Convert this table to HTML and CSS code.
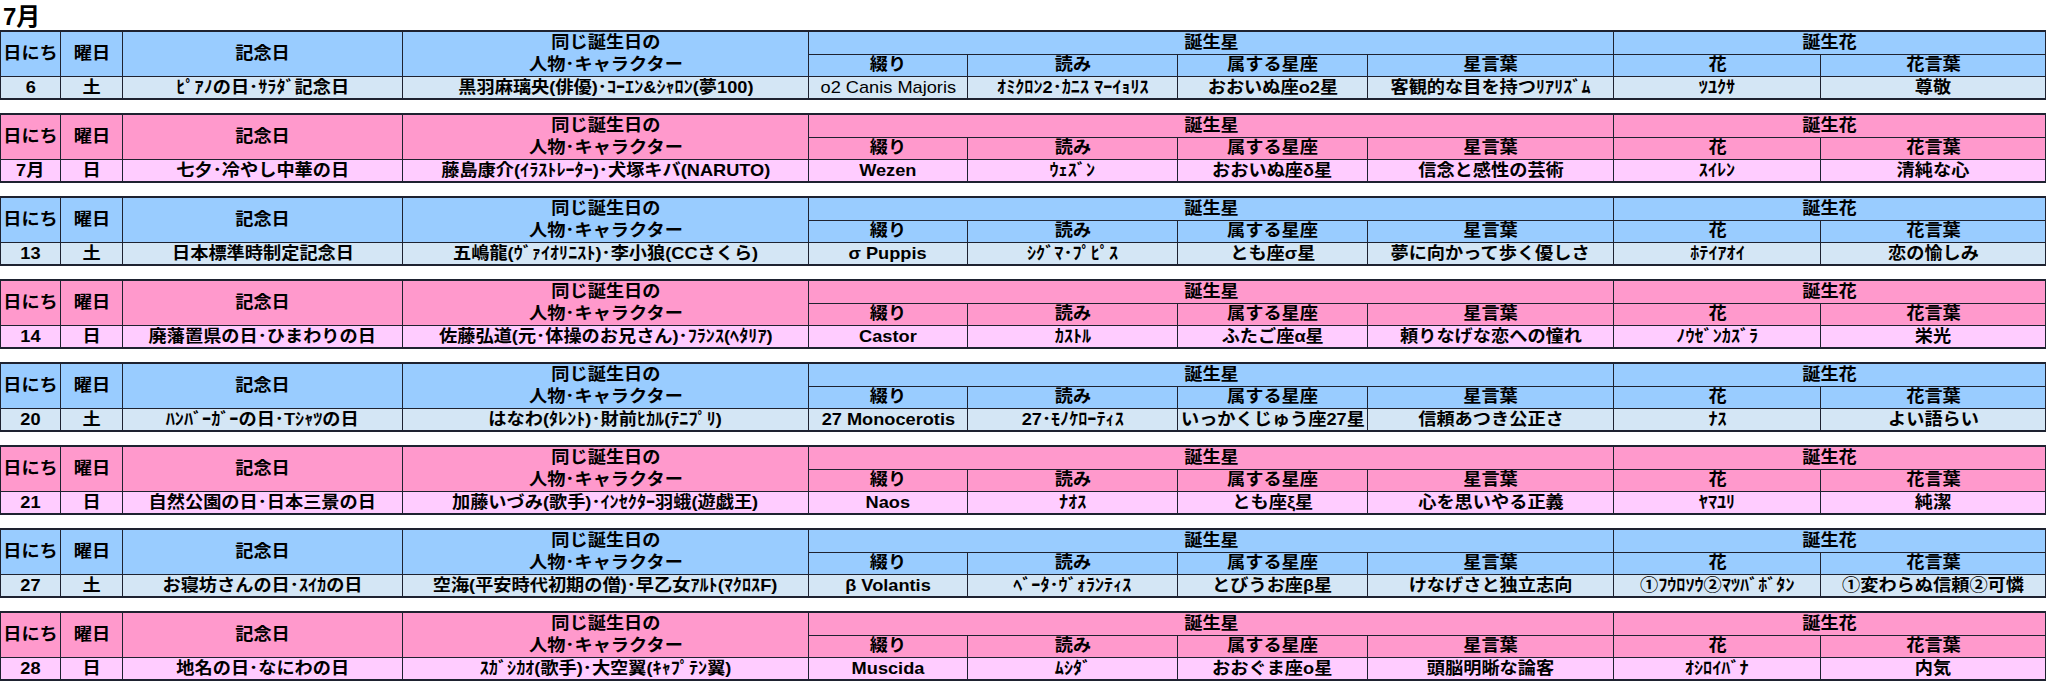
FILE: index.html
```html
<!DOCTYPE html>
<html lang="ja">
<head>
<meta charset="utf-8">
<title>7月</title>
<link rel="stylesheet" href="styles.css">
</head>
<body>
<div class="title">7月</div>

<table class="blk blue">
<colgroup><col class="c1"><col class="c2"><col class="c3"><col class="c4"><col class="c5"><col class="c6"><col class="c7"><col class="c8"><col class="c9"><col class="c10"></colgroup>
<tr class="h1"><td rowspan="2"><span class="s">日にち</span></td><td rowspan="2"><span class="s">曜日</span></td><td rowspan="2"><span class="s">記念日</span></td><td rowspan="2" class="two"><span class="s">同じ誕生日の<br>人物･キャラクター</span></td><td colspan="4"><span class="s">誕生星</span></td><td colspan="2"><span class="s">誕生花</span></td></tr>
<tr class="h2"><td><span class="s">綴り</span></td><td><span class="s">読み</span></td><td><span class="s">属する星座</span></td><td><span class="s">星言葉</span></td><td><span class="s">花</span></td><td><span class="s">花言葉</span></td></tr>
<tr class="d"><td><span class="s">6</span></td><td><span class="s">土</span></td><td><span class="s">ﾋﾟｱﾉの日･ｻﾗﾀﾞ記念日</span></td><td><span class="s">黒羽麻璃央(俳優)･ｺｰｴﾝ&amp;ｼｬﾛﾝ(夢100)</span></td><td><span class="s nb">o2 Canis Majoris</span></td><td><span class="s">ｵﾐｸﾛﾝ2･ｶﾆｽ ﾏｰｲｮﾘｽ</span></td><td><span class="s">おおいぬ座o2星</span></td><td><span class="s">客観的な目を持つﾘｱﾘｽﾞﾑ</span></td><td><span class="s">ﾂﾕｸｻ</span></td><td><span class="s">尊敬</span></td></tr>
</table>

<table class="blk pink">
<colgroup><col class="c1"><col class="c2"><col class="c3"><col class="c4"><col class="c5"><col class="c6"><col class="c7"><col class="c8"><col class="c9"><col class="c10"></colgroup>
<tr class="h1"><td rowspan="2"><span class="s">日にち</span></td><td rowspan="2"><span class="s">曜日</span></td><td rowspan="2"><span class="s">記念日</span></td><td rowspan="2" class="two"><span class="s">同じ誕生日の<br>人物･キャラクター</span></td><td colspan="4"><span class="s">誕生星</span></td><td colspan="2"><span class="s">誕生花</span></td></tr>
<tr class="h2"><td><span class="s">綴り</span></td><td><span class="s">読み</span></td><td><span class="s">属する星座</span></td><td><span class="s">星言葉</span></td><td><span class="s">花</span></td><td><span class="s">花言葉</span></td></tr>
<tr class="d"><td><span class="s">7月</span></td><td><span class="s">日</span></td><td><span class="s">七夕･冷やし中華の日</span></td><td><span class="s">藤島康介(ｲﾗｽﾄﾚｰﾀｰ)･犬塚キバ(NARUTO)</span></td><td><span class="s">Wezen</span></td><td><span class="s">ｳｪｽﾞﾝ</span></td><td><span class="s">おおいぬ座δ星</span></td><td><span class="s">信念と感性の芸術</span></td><td><span class="s">ｽｲﾚﾝ</span></td><td><span class="s">清純な心</span></td></tr>
</table>

<table class="blk blue">
<colgroup><col class="c1"><col class="c2"><col class="c3"><col class="c4"><col class="c5"><col class="c6"><col class="c7"><col class="c8"><col class="c9"><col class="c10"></colgroup>
<tr class="h1"><td rowspan="2"><span class="s">日にち</span></td><td rowspan="2"><span class="s">曜日</span></td><td rowspan="2"><span class="s">記念日</span></td><td rowspan="2" class="two"><span class="s">同じ誕生日の<br>人物･キャラクター</span></td><td colspan="4"><span class="s">誕生星</span></td><td colspan="2"><span class="s">誕生花</span></td></tr>
<tr class="h2"><td><span class="s">綴り</span></td><td><span class="s">読み</span></td><td><span class="s">属する星座</span></td><td><span class="s">星言葉</span></td><td><span class="s">花</span></td><td><span class="s">花言葉</span></td></tr>
<tr class="d"><td><span class="s">13</span></td><td><span class="s">土</span></td><td><span class="s">日本標準時制定記念日</span></td><td><span class="s">五嶋龍(ｳﾞｧｲｵﾘﾆｽﾄ)･李小狼(CCさくら)</span></td><td><span class="s">σ Puppis</span></td><td><span class="s">ｼｸﾞﾏ･ﾌﾟﾋﾟｽ</span></td><td><span class="s">とも座σ星</span></td><td><span class="s">夢に向かって歩く優しさ</span></td><td><span class="s">ﾎﾃｲｱｵｲ</span></td><td><span class="s">恋の愉しみ</span></td></tr>
</table>

<table class="blk pink">
<colgroup><col class="c1"><col class="c2"><col class="c3"><col class="c4"><col class="c5"><col class="c6"><col class="c7"><col class="c8"><col class="c9"><col class="c10"></colgroup>
<tr class="h1"><td rowspan="2"><span class="s">日にち</span></td><td rowspan="2"><span class="s">曜日</span></td><td rowspan="2"><span class="s">記念日</span></td><td rowspan="2" class="two"><span class="s">同じ誕生日の<br>人物･キャラクター</span></td><td colspan="4"><span class="s">誕生星</span></td><td colspan="2"><span class="s">誕生花</span></td></tr>
<tr class="h2"><td><span class="s">綴り</span></td><td><span class="s">読み</span></td><td><span class="s">属する星座</span></td><td><span class="s">星言葉</span></td><td><span class="s">花</span></td><td><span class="s">花言葉</span></td></tr>
<tr class="d"><td><span class="s">14</span></td><td><span class="s">日</span></td><td><span class="s">廃藩置県の日･ひまわりの日</span></td><td><span class="s">佐藤弘道(元･体操のお兄さん)･ﾌﾗﾝｽ(ﾍﾀﾘｱ)</span></td><td><span class="s">Castor</span></td><td><span class="s">ｶｽﾄﾙ</span></td><td><span class="s">ふたご座α星</span></td><td><span class="s">頼りなげな恋への憧れ</span></td><td><span class="s">ﾉｳｾﾞﾝｶｽﾞﾗ</span></td><td><span class="s">栄光</span></td></tr>
</table>

<table class="blk blue">
<colgroup><col class="c1"><col class="c2"><col class="c3"><col class="c4"><col class="c5"><col class="c6"><col class="c7"><col class="c8"><col class="c9"><col class="c10"></colgroup>
<tr class="h1"><td rowspan="2"><span class="s">日にち</span></td><td rowspan="2"><span class="s">曜日</span></td><td rowspan="2"><span class="s">記念日</span></td><td rowspan="2" class="two"><span class="s">同じ誕生日の<br>人物･キャラクター</span></td><td colspan="4"><span class="s">誕生星</span></td><td colspan="2"><span class="s">誕生花</span></td></tr>
<tr class="h2"><td><span class="s">綴り</span></td><td><span class="s">読み</span></td><td><span class="s">属する星座</span></td><td><span class="s">星言葉</span></td><td><span class="s">花</span></td><td><span class="s">花言葉</span></td></tr>
<tr class="d"><td><span class="s">20</span></td><td><span class="s">土</span></td><td><span class="s">ﾊﾝﾊﾞｰｶﾞｰの日･Tｼｬﾂの日</span></td><td><span class="s">はなわ(ﾀﾚﾝﾄ)･財前ﾋｶﾙ(ﾃﾆﾌﾟﾘ)</span></td><td><span class="s">27 Monocerotis</span></td><td><span class="s">27･ﾓﾉｹﾛｰﾃｨｽ</span></td><td><span class="s">いっかくじゅう座27星</span></td><td><span class="s">信頼あつき公正さ</span></td><td><span class="s">ﾅｽ</span></td><td><span class="s">よい語らい</span></td></tr>
</table>

<table class="blk pink">
<colgroup><col class="c1"><col class="c2"><col class="c3"><col class="c4"><col class="c5"><col class="c6"><col class="c7"><col class="c8"><col class="c9"><col class="c10"></colgroup>
<tr class="h1"><td rowspan="2"><span class="s">日にち</span></td><td rowspan="2"><span class="s">曜日</span></td><td rowspan="2"><span class="s">記念日</span></td><td rowspan="2" class="two"><span class="s">同じ誕生日の<br>人物･キャラクター</span></td><td colspan="4"><span class="s">誕生星</span></td><td colspan="2"><span class="s">誕生花</span></td></tr>
<tr class="h2"><td><span class="s">綴り</span></td><td><span class="s">読み</span></td><td><span class="s">属する星座</span></td><td><span class="s">星言葉</span></td><td><span class="s">花</span></td><td><span class="s">花言葉</span></td></tr>
<tr class="d"><td><span class="s">21</span></td><td><span class="s">日</span></td><td><span class="s">自然公園の日･日本三景の日</span></td><td><span class="s">加藤いづみ(歌手)･ｲﾝｾｸﾀｰ羽蛾(遊戯王)</span></td><td><span class="s">Naos</span></td><td><span class="s">ﾅｵｽ</span></td><td><span class="s">とも座ξ星</span></td><td><span class="s">心を思いやる正義</span></td><td><span class="s">ﾔﾏﾕﾘ</span></td><td><span class="s">純潔</span></td></tr>
</table>

<table class="blk blue">
<colgroup><col class="c1"><col class="c2"><col class="c3"><col class="c4"><col class="c5"><col class="c6"><col class="c7"><col class="c8"><col class="c9"><col class="c10"></colgroup>
<tr class="h1"><td rowspan="2"><span class="s">日にち</span></td><td rowspan="2"><span class="s">曜日</span></td><td rowspan="2"><span class="s">記念日</span></td><td rowspan="2" class="two"><span class="s">同じ誕生日の<br>人物･キャラクター</span></td><td colspan="4"><span class="s">誕生星</span></td><td colspan="2"><span class="s">誕生花</span></td></tr>
<tr class="h2"><td><span class="s">綴り</span></td><td><span class="s">読み</span></td><td><span class="s">属する星座</span></td><td><span class="s">星言葉</span></td><td><span class="s">花</span></td><td><span class="s">花言葉</span></td></tr>
<tr class="d"><td><span class="s">27</span></td><td><span class="s">土</span></td><td><span class="s">お寝坊さんの日･ｽｲｶの日</span></td><td><span class="s">空海(平安時代初期の僧)･早乙女ｱﾙﾄ(ﾏｸﾛｽF)</span></td><td><span class="s">β Volantis</span></td><td><span class="s">ﾍﾞｰﾀ･ｳﾞｫﾗﾝﾃｨｽ</span></td><td><span class="s">とびうお座β星</span></td><td><span class="s">けなげさと独立志向</span></td><td><span class="s">①ﾌｳﾛｿｳ②ﾏﾂﾊﾞﾎﾞﾀﾝ</span></td><td><span class="s">①変わらぬ信頼②可憐</span></td></tr>
</table>

<table class="blk pink">
<colgroup><col class="c1"><col class="c2"><col class="c3"><col class="c4"><col class="c5"><col class="c6"><col class="c7"><col class="c8"><col class="c9"><col class="c10"></colgroup>
<tr class="h1"><td rowspan="2"><span class="s">日にち</span></td><td rowspan="2"><span class="s">曜日</span></td><td rowspan="2"><span class="s">記念日</span></td><td rowspan="2" class="two"><span class="s">同じ誕生日の<br>人物･キャラクター</span></td><td colspan="4"><span class="s">誕生星</span></td><td colspan="2"><span class="s">誕生花</span></td></tr>
<tr class="h2"><td><span class="s">綴り</span></td><td><span class="s">読み</span></td><td><span class="s">属する星座</span></td><td><span class="s">星言葉</span></td><td><span class="s">花</span></td><td><span class="s">花言葉</span></td></tr>
<tr class="d"><td><span class="s">28</span></td><td><span class="s">日</span></td><td><span class="s">地名の日･なにわの日</span></td><td><span class="s">ｽｶﾞｼｶｵ(歌手)･大空翼(ｷｬﾌﾟﾃﾝ翼)</span></td><td><span class="s">Muscida</span></td><td><span class="s">ﾑｼﾀﾞ</span></td><td><span class="s">おおぐま座o星</span></td><td><span class="s">頭脳明晰な論客</span></td><td><span class="s">ｵｼﾛｲﾊﾞﾅ</span></td><td><span class="s">内気</span></td></tr>
</table>
</body>
</html>
```

FILE: styles.css
```css
html, body {
  margin: 0;
  padding: 0;
  background: #ffffff;
}
body {
  font-family: "Liberation Sans", "Noto Sans CJK JP", sans-serif;
  font-weight: bold;
  color: #000000;
}
.title {
  height: 30px;
  padding-left: 3px;
  font-size: 24px;
  line-height: 34px;
}
.blk {
  border-collapse: collapse;
  table-layout: fixed;
  width: 2045px;
  margin-bottom: 13px;
}
.c1 { width: 60px; }
.c2 { width: 62px; }
.c3 { width: 280px; }
.c4 { width: 406px; }
.c5 { width: 159px; }
.c6 { width: 210px; }
.c7 { width: 190px; }
.c8 { width: 246px; }
.c9 { width: 207px; }
.c10 { width: 225px; }
.blk td {
  border: 1px solid #1e2230;
  height: 21px;
  padding: 0;
  text-align: center;
  vertical-align: middle;
  white-space: nowrap;
  font-size: 17px;
  line-height: 20px;
  overflow: hidden;
}
.blk .h1 td {
  border-top: 2px solid #1e2230;
}
.blk .d td {
  border-bottom: 2px solid #1e2230;
}
.blk td.two {
  line-height: 22px;
}
.blue .h1 td, .blue .h2 td { background: #99ccff; }
.blue .d td { background: #d4e6f5; }
.pink .h1 td, .pink .h2 td { background: #ff99cc; }
.pink .d td { background: #ffccff; }
.s {
  display: inline-block;
  transform: scaleX(1.07);
}
.nb {
  font-weight: normal;
}
```
